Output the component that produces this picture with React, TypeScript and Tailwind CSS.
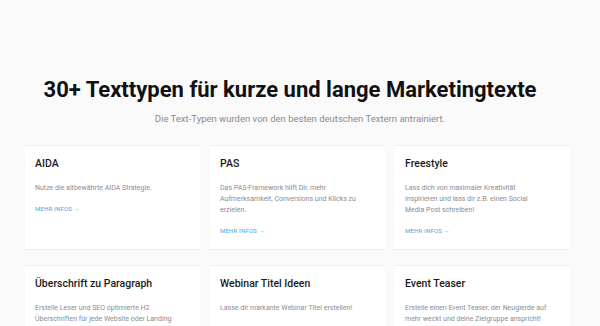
import React from 'react';

const cards = [
  { title: 'AIDA', text: 'Nutze die altbewährte AIDA Strategie.' },
  { title: 'PAS', text: 'Das PAS-Framework hilft Dir, mehr Aufmerksamkeit, Conversions und Klicks zu erzielen.' },
  { title: 'Freestyle', text: 'Lass dich von maximaler Kreativität inspirieren und lass dir z.B. einen Social Media Post schreiben!' },
  { title: 'Überschrift zu Paragraph', text: 'Erstelle Leser und SEO optimierte H2 Überschriften für jede Website oder Landing Page.' },
  { title: 'Webinar Titel Ideen', text: 'Lasse dir markante Webinar Titel erstellen!' },
  { title: 'Event Teaser', text: 'Erstelle einen Event Teaser, der Neugierde auf mehr weckt und deine Zielgruppe anspricht!' },
];

export default function App() {
  return (
    <div className="w-[600px] h-[326px] overflow-hidden bg-[#fafafb] font-['Roboto',sans-serif]">
      <div className="pt-[78px] flex flex-col items-center">
        <h1 className="text-[22px] leading-[24px] font-bold text-[#111] mr-[20px]">
          30+ Texttypen für kurze und lange Marketingtexte
        </h1>
        <p className="mt-[11px] text-[9.5px] leading-[12px] text-[#8a8a8e]">
          Die Text-Typen wurden von den besten deutschen Textern antrainiert.
        </p>
      </div>
      <div className="mt-[20px] pl-[25px] w-[570px] grid grid-cols-3 gap-x-[10px] gap-y-[15px]">
        {cards.map((c) => (
          <div
            key={c.title}
            className="h-[105px] bg-white border-t border-b border-[#efeff2] shadow-[0_1px_2px_rgba(0,0,0,0.02)] px-[10px] pt-[12px]"
          >
            <h3 className="text-[10.5px] leading-[12px] font-medium text-[#1a1a1a]">{c.title}</h3>
            <p className="mt-[13px] w-[142px] text-[7px] leading-[11px] text-[#8c8c92]">{c.text}</p>
            <div className="mt-[11px] text-[6px] leading-[8px] tracking-[0.2px] text-[#4aa3e4] uppercase">
              Mehr Infos →
            </div>
          </div>
        ))}
      </div>
    </div>
  );
}
